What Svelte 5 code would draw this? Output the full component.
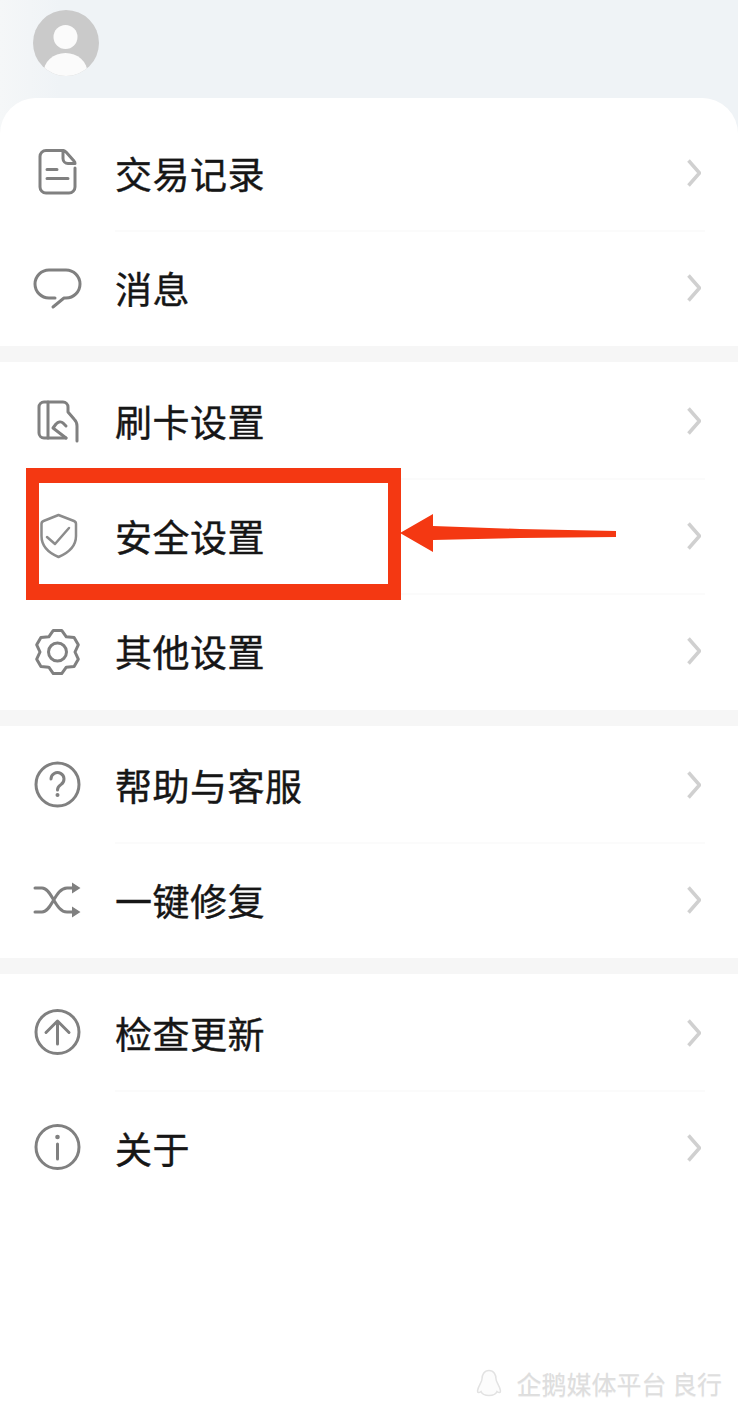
<script>
    // six tooth gear outline, centred on 24.5,25
    function gearPath() {
        const cx = 24.5, cy = 25;
        let d = '';
        for (let i = 0; i < 6; i++) {
            const a = (-90 + i * 60) * Math.PI / 180;
            const pts = [[17.5, -30], [22, -11], [22, 11], [17.5, 30]].map(([r, off]) => {
                const t = a + off * Math.PI / 180;
                return (cx + r * Math.cos(t)).toFixed(1) + ' ' + (cy + r * Math.sin(t)).toFixed(1);
            });
            d += (i === 0 ? 'M' : 'L') + pts[0] + 'L' + pts[1] + 'L' + pts[2] + 'L' + pts[3];
        }
        return d + 'Z';
    }

    const groups = [
        [{ id: 'doc', label: '交易记录' }, { id: 'msg', label: '消息' }],
        [{ id: 'card', label: '刷卡设置' }, { id: 'shield', label: '安全设置' }, { id: 'gear', label: '其他设置' }],
        [{ id: 'help', label: '帮助与客服' }, { id: 'shuffle', label: '一键修复' }],
        [{ id: 'update', label: '检查更新' }, { id: 'info', label: '关于' }]
    ];
</script>

<div class="page">
    <header>
        <svg class="avatar" width="66" height="66" viewBox="0 0 66 66">
            <defs>
                <clipPath id="round"><circle cx="33" cy="33" r="33" /></clipPath>
            </defs>
            <circle cx="33" cy="33" r="33" fill="#cacaca" />
            <circle cx="32.5" cy="27" r="12" fill="#fbfbfb" />
            <ellipse cx="32.5" cy="63" rx="22" ry="20" fill="#fbfbfb" clip-path="url(#round)" />
        </svg>
    </header>

    <main>
        {#each groups as group}
            <section>
                {#each group as item}
                    <div class="row">
                        <svg class="icon" width="50" height="50" viewBox="0 0 50 50">
                            {#if item.id === 'doc'}
                                <path d="M30 1.500H13a6 6 0 0 0-6 6V38a6 6 0 0 0 6 6H36a6 6 0 0 0 6-6V19" />
                                <path d="M30 1.500c1 0 2 .5 3 1.500l8 9c1 1 1 2.500 1 2.500H35a5 5 0 0 1-5-5Z" />
                                <path d="M14 20.500H24M14 29.500H35" />
                            {:else if item.id === 'msg'}
                                <path d="M22 34H16a14 14 0 0 1 0-28H33a14 14 0 0 1 0 28H31L20 43" />
                            {:else if item.id === 'card'}
                                <path d="M33 41H11a5 5 0 0 1-5-5V10a5 5 0 0 1 5-5H30a5 5 0 0 1 5 5V15L41 22c2 2 3 4 3 7V44" />
                                <path d="M15 5V41" />
                                <path d="M20 31l3-4c2-2 5-3 7-1l3 3M20 31L33 41" />
                            {:else if item.id === 'shield'}
                                <path class="thin" d="M25.500 3L41 9c1.500.6 2 1.500 2 3V24c0 10-8 17-17.500 21C16 41 8.500 34 8.500 24V12c0-1.500.5-2.400 2-3Z" />
                                <path class="thin" d="M14 25l8 7 14-16" />
                            {:else if item.id === 'gear'}
                                <path d={gearPath()} />
                                <circle cx="24.500" cy="25" r="9" />
                            {:else if item.id === 'help'}
                                <circle cx="24.500" cy="23.500" r="21.500" />
                                <path d="M18 18a6.500 6.500 0 1 1 10 5.500c-2.500 1.500-3.500 2.500-3.500 5.500" />
                                <circle class="dot" cx="24.500" cy="34" r="2" />
                            {:else if item.id === 'shuffle'}
                                <path d="M2 12H9C19 12 22 36 34 36H41M2 36H9C19 36 22 12 34 12H41" />
                                <path class="dot" d="M39 6.500L47.500 12 39 17.500ZM39 30.500L47.500 36 39 41.500Z" />
                            {:else if item.id === 'update'}
                                <circle cx="24.500" cy="23" r="21.500" />
                                <path d="M24.500 12V35M13 23.500L24.500 12 36 23.500" />
                            {:else if item.id === 'info'}
                                <circle cx="24.500" cy="23" r="21.500" />
                                <circle class="dot" cx="24.500" cy="13" r="2.300" />
                                <path d="M24.500 20V35" />
                            {/if}
                        </svg>
                        <span class="label">{item.label}</span>
                        <svg class="chevron" width="14" height="28" viewBox="0 0 14 28">
                            <path d="M1.500 1.500L12.500 14 1.500 26.500" />
                        </svg>
                    </div>
                {/each}
            </section>
        {/each}
    </main>

    <!-- red annotation drawn over the screenshot -->
    <div class="highlight"></div>
    <svg class="arrow" width="220" height="44" viewBox="0 0 220 44">
        <path d="M0 22L33 3V15L120 18 216 20V26L120 27 33 29V41Z" />
    </svg>

    <div class="watermark">
        <svg width="26" height="28" viewBox="0 0 26 28">
            <path d="M13 1.500C8 1.500 6 6 6 10 6 13 2 17 1.500 22c0 2 1.500 2 3.500.5C6 25 9 26.500 13 26.500s7-1.500 8-4c2 1.500 3.500 1.500 3.500-.5C24 17 20 13 20 10 20 6 18 1.500 13 1.500Z" />
        </svg>
        <span>企鹅媒体平台 良行</span>
    </div>
</div>

<style>
    :global(body) {
        margin: 0;
        background: #fff;
    }

    .page {
        position: relative;
        width: 738px;
        height: 1409px;
        overflow: hidden;
        background: linear-gradient(90deg, #f5f7f8 0, #eff3f6 60px);
        font-family: "Noto Sans CJK SC", "Noto Sans", sans-serif;
    }

    header {
        height: 98px;
        box-sizing: border-box;
        padding: 10px 0 0 33px;
    }

    .avatar {
        display: block;
    }

    main {
        background: #f6f6f6;
        border-radius: 36px 36px 0 0;
        overflow: hidden;
        display: flex;
        flex-direction: column;
        gap: 16px;
        height: 1311px;
    }

    section {
        background: #fff;
        padding: 1px 0;
    }

    section:first-child {
        padding-top: 17px;
    }

    section:nth-child(2) {
        padding-bottom: 2px;
    }

    section:last-child {
        flex: 1;
    }

    .row {
        height: 115px;
        display: flex;
        align-items: center;
        padding-left: 33px;
        position: relative;
    }

    .row + .row::before {
        content: "";
        position: absolute;
        top: 0;
        left: 115px;
        right: 33px;
        height: 2px;
        background: #fbfbfb;
    }

    .icon {
        flex: none;
        margin: 3px 32px 0 0;
        overflow: visible;
    }

    .icon path,
    .icon circle {
        fill: none;
        stroke: #808080;
        stroke-width: 3;
        stroke-linecap: round;
        stroke-linejoin: round;
    }

    .icon .thin {
        stroke: #8c8c8c;
        stroke-width: 2.500;
    }

    .icon .dot {
        fill: #808080;
        stroke: none;
    }

    .label {
        font-size: 37px;
        letter-spacing: 0.500px;
        color: #161616;
        line-height: 50px;
        -webkit-text-stroke: 0.4px #161616;
    }

    .chevron {
        margin-left: auto;
        margin-right: 37px;
    }

    .chevron path {
        fill: none;
        stroke: #d0d0d0;
        stroke-width: 3.500;
    }

    .highlight {
        position: absolute;
        left: 26px;
        top: 468px;
        width: 349px;
        height: 101px;
        border: solid #f43812;
        border-width: 15px 13px 16px;
    }

    .arrow {
        position: absolute;
        left: 400px;
        top: 511px;
    }

    .arrow path {
        fill: #f43812;
    }

    .watermark {
        position: absolute;
        right: 16px;
        top: 1366px;
        display: flex;
        align-items: center;
        gap: 14px;
        color: #dedede;
        font-size: 25px;
        line-height: 34px;
        text-shadow: 0 1px 0 #f0f0f0;
    }

    .watermark path {
        fill: #fcfcfc;
        stroke: #e2e2e2;
        stroke-width: 1.500;
    }
</style>
